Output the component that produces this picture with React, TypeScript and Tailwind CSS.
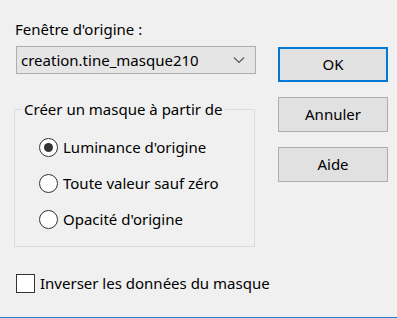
import React from "react";

function Radio({ checked, label }: { checked?: boolean; label: string }) {
  return (
    <div className="flex items-center h-[20px]">
      <div className="w-[19px] h-[19px] rounded-full border border-[#333333] bg-white flex items-center justify-center shrink-0">
        {checked && <div className="w-[9px] h-[9px] rounded-full bg-[#333333]" />}
      </div>
      <span className="ml-[5px] leading-[20px] whitespace-nowrap">{label}</span>
    </div>
  );
}

function Btn({ label, primary }: { label: string; primary?: boolean }) {
  return (
    <div
      className={
        primary
          ? "w-[110px] h-[35px] border-2 border-[#0078d7] bg-[#e1e1e1] flex items-center justify-center"
          : "w-[110px] h-[35px] border border-[#adadad] bg-[#e1e1e1] flex items-center justify-center"
      }
    >
      {label}
    </div>
  );
}

export default function App() {
  return (
    <div
      className="w-[397px] h-[318px] bg-[#f0f0f0] border-b border-[#2a7ad0] text-[15px] text-black flex overflow-hidden"
      style={{ fontFamily: '"Noto Sans", "Open Sans", sans-serif' }}
    >
      <div className="w-[256px] pl-[14px] flex flex-col">
        <div className="mt-[19px] ml-[1px] leading-[20px]">Fenêtre d'origine :</div>
        <div className="mt-[7px] ml-[2px] w-[240px] h-[28px] border border-[#adadad] bg-[#e5e5e5] flex items-center pl-[4px] pr-[10px]">
          <span className="flex-1 leading-[20px]">creation.tine_masque210</span>
          <svg width="12" height="8" viewBox="0 0 12 8" className="shrink-0">
            <path d="M1 1.5 L6 6.5 L11 1.5" fill="none" stroke="#555" strokeWidth="1.1" />
          </svg>
        </div>
        <fieldset className="mt-[25px] w-[241px] h-[148px] border border-[#dcdcdc] m-0 p-0">
          <legend className="ml-[7px] px-[2px] leading-[20px]">Créer un masque à partir de</legend>
          <div className="flex flex-col gap-[16px] pl-[24px] pt-[18px]">
            <Radio checked label="Luminance d'origine" />
            <Radio label="Toute valeur sauf zéro" />
            <Radio label="Opacité d'origine" />
          </div>
        </fieldset>
        <div className="mt-[26px] ml-[2px] flex items-center h-[20px] w-[300px]">
          <div className="w-[19px] h-[19px] border border-[#333333] bg-white shrink-0" />
          <span className="ml-[5px] leading-[20px] whitespace-nowrap">Inverser les données du masque</span>
        </div>
      </div>
      <div className="ml-[22px] pt-[47px] flex flex-col gap-[15px]">
        <Btn primary label="OK" />
        <Btn label="Annuler" />
        <Btn label="Aide" />
      </div>
    </div>
  );
}
